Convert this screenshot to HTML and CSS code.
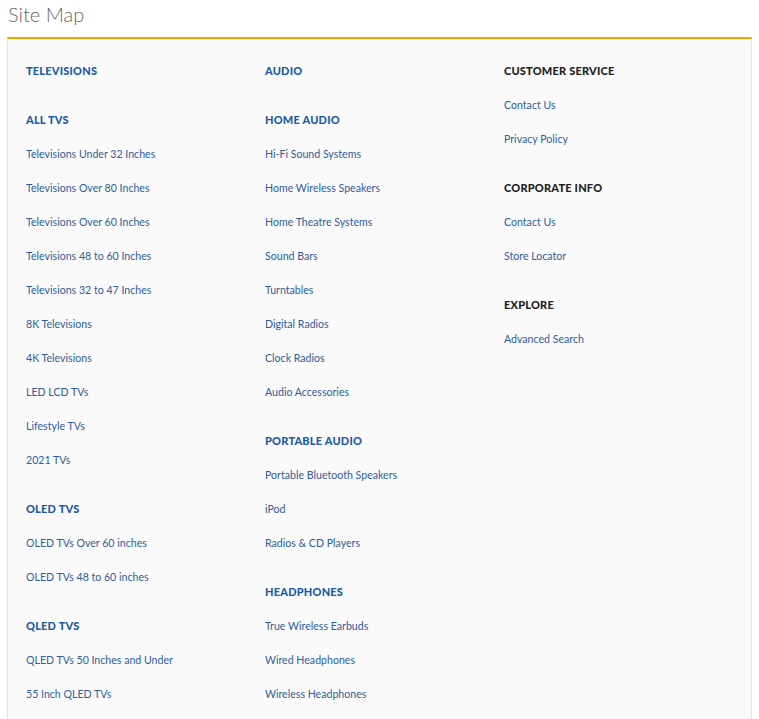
FILE: index.html
```html
<!DOCTYPE html>
<html lang="en">
<head>
    <meta charset="UTF-8">
    <title>Site Map</title>
    <link rel="stylesheet" href="styles.css">
</head>
<body>
    <h1 class="page-title">Site Map</h1>

    <div class="sitemap">
        <div class="sitemap-col">
            <div class="group">
                <a class="heading" href="#">TELEVISIONS</a>
            </div>
            <div class="group">
                <a class="heading" href="#">ALL TVS</a>
                <a href="#">Televisions Under 32 Inches</a>
                <a href="#">Televisions Over 80 Inches</a>
                <a href="#">Televisions Over 60 Inches</a>
                <a href="#">Televisions 48 to 60 Inches</a>
                <a href="#">Televisions 32 to 47 Inches</a>
                <a href="#">8K Televisions</a>
                <a href="#">4K Televisions</a>
                <a href="#">LED LCD TVs</a>
                <a href="#">Lifestyle TVs</a>
                <a href="#">2021 TVs</a>
            </div>
            <div class="group">
                <a class="heading" href="#">OLED TVS</a>
                <a href="#">OLED TVs Over 60 inches</a>
                <a href="#">OLED TVs 48 to 60 inches</a>
            </div>
            <div class="group">
                <a class="heading" href="#">QLED TVS</a>
                <a href="#">QLED TVs 50 Inches and Under</a>
                <a href="#">55 Inch QLED TVs</a>
            </div>
        </div>

        <div class="sitemap-col">
            <div class="group">
                <a class="heading" href="#">AUDIO</a>
            </div>
            <div class="group">
                <a class="heading" href="#">HOME AUDIO</a>
                <a href="#">Hi-Fi Sound Systems</a>
                <a href="#">Home Wireless Speakers</a>
                <a href="#">Home Theatre Systems</a>
                <a href="#">Sound Bars</a>
                <a href="#">Turntables</a>
                <a href="#">Digital Radios</a>
                <a href="#">Clock Radios</a>
                <a href="#">Audio Accessories</a>
            </div>
            <div class="group">
                <a class="heading" href="#">PORTABLE AUDIO</a>
                <a href="#">Portable Bluetooth Speakers</a>
                <a href="#">iPod</a>
                <a href="#">Radios &amp; CD Players</a>
            </div>
            <div class="group">
                <a class="heading" href="#">HEADPHONES</a>
                <a href="#">True Wireless Earbuds</a>
                <a href="#">Wired Headphones</a>
                <a href="#">Wireless Headphones</a>
            </div>
        </div>

        <div class="sitemap-col info">
            <div class="group">
                <span class="heading">CUSTOMER SERVICE</span>
                <a href="#">Contact Us</a>
                <a href="#">Privacy Policy</a>
            </div>
            <div class="group">
                <span class="heading">CORPORATE INFO</span>
                <a href="#">Contact Us</a>
                <a href="#">Store Locator</a>
            </div>
            <div class="group">
                <span class="heading">EXPLORE</span>
                <a href="#">Advanced Search</a>
            </div>
        </div>
    </div>
</body>
</html>
```

FILE: styles.css
```css
body {
    font-family: Lato, "Open Sans", sans-serif;
    background-color: #fff;
    margin: 0;
    padding: 0;
}

.page-title {
    font-size: 20px;
    font-weight: 300;
    color: #666;
    line-height: 29px;
    margin: 0;
    padding: 0 8px 8px;
}

.sitemap {
    margin: 0 7px;
    background-color: #fafafa;
    border-top: 2px solid #f0a500;
    border-left: 1px solid #e3e3e3;
    border-right: 1px solid #e3e3e3;
    padding: 15px 18px 0;
    display: grid;
    grid-template-columns: 239px 239px 1fr;
}

.group {
    display: flex;
    flex-direction: column;
    margin-bottom: 15px;
}

.group a,
.group .heading {
    display: block;
    line-height: 34px;
    font-size: 10.6px;
    color: #2f5d9f;
    text-decoration: none;
}

.group .heading {
    font-size: 11px;
    font-weight: 900;
    color: #1d5aa6;
    letter-spacing: 0.2px;
}

.info .heading {
    color: #222;
}
```
